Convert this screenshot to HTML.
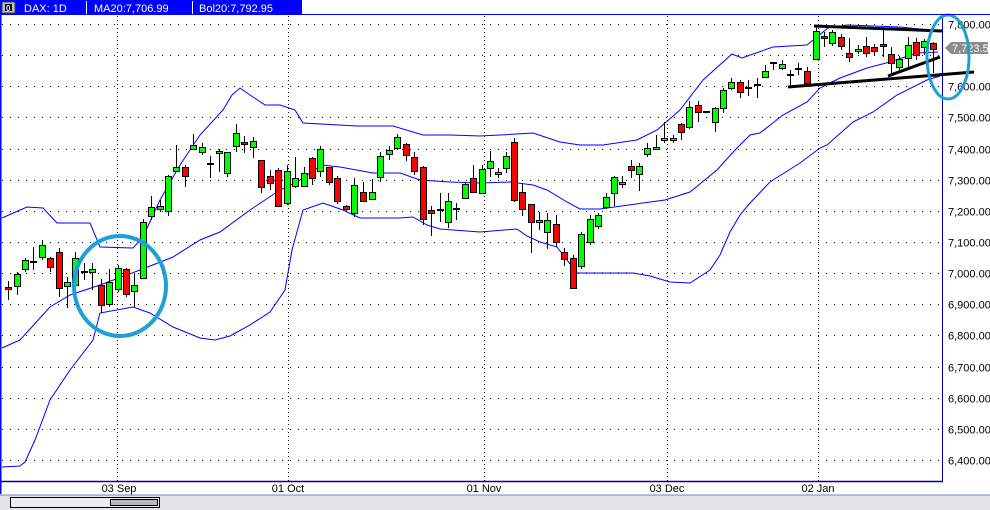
<!DOCTYPE html>
<html><head><meta charset="utf-8"><style>
html,body{margin:0;padding:0;background:#fff;width:990px;height:510px;overflow:hidden}
svg{display:block}
text{font-family:"Liberation Sans",sans-serif}
</style></head><body>
<svg id="s" width="990" height="510" xmlns="http://www.w3.org/2000/svg">
<rect x="0" y="0" width="990" height="510" fill="#fff"/>
<g id="grid"></g>
<g id="bands" fill="none" stroke="#0000ff" stroke-width="1"></g>
<g id="candles"></g>
<g stroke="#000" stroke-width="3" fill="none">
<line x1="814" y1="26" x2="942" y2="31"/>
<line x1="788" y1="87" x2="974" y2="72"/>
<line x1="888" y1="76" x2="940" y2="57"/>
</g>
<ellipse cx="120" cy="286" rx="46" ry="50" fill="none" stroke="#1e9fd8" stroke-width="4"/>
<!-- axis -->
<line x1="942.5" y1="15" x2="942.5" y2="482" stroke="#0000a0" stroke-width="1"/>
<line x1="0" y1="481.5" x2="943" y2="481.5" stroke="#0000a0" stroke-width="1.5"/>
<line x1="0.5" y1="15" x2="0.5" y2="494" stroke="#0000ff" stroke-width="2"/>
<g id="labels" font-size="11" fill="#000"></g>
<g>
<polygon points="945,48 951,42 988,42 988,54 951,54" fill="#8c8c8c"/>
<text x="952" y="52" font-size="11" fill="#fff">7,723.52</text>
</g>
<ellipse cx="948" cy="57" rx="21" ry="42" fill="none" stroke="#1e9fd8" stroke-width="3"/>
<g font-size="11" fill="#000" text-anchor="middle">
<text x="119" y="492">03 Sep</text>
<text x="288" y="492">01 Oct</text>
<text x="484" y="492">01 Nov</text>
<text x="667" y="492">03 Dec</text>
<text x="818" y="492">02 Jan</text>
</g>
<rect x="0" y="495" width="990" height="15" fill="#e3e3e8"/>
<line x1="0" y1="495" x2="990" y2="495" stroke="#6a8ad8" stroke-width="1"/>
<rect x="10.5" y="497.5" width="149" height="10" fill="#ececec" stroke="#000"/>
<rect x="110.5" y="499.5" width="47" height="6" fill="#b8b8b8" stroke="#000"/>
<!-- top bar -->
<rect x="0" y="0" width="302" height="15" fill="#0000ff"/>
<line x1="0" y1="14.5" x2="990" y2="14.5" stroke="#0000ff" stroke-width="1"/>
<rect x="2" y="2" width="13" height="11" fill="#c0c0c0" stroke="#404040" stroke-width="1"/>
<rect x="5" y="4" width="7" height="7" fill="#000"/>
<text x="6" y="11" font-size="8" fill="#fff" font-weight="bold">0</text>
<line x1="86.5" y1="1" x2="86.5" y2="14" stroke="#fff"/>
<line x1="192.5" y1="1" x2="192.5" y2="14" stroke="#fff"/>
<g font-size="11" fill="#fff">
<text x="24" y="12">DAX: 1D</text>
<text x="94" y="12">MA20:7,706.99</text>
<text x="199" y="12">Bol20:7,792.95</text>
</g>
</svg>
<script>
var NS="http://www.w3.org/2000/svg";
function el(p,t,a){var e=document.createElementNS(NS,t);for(var k in a)e.setAttribute(k,a[k]);document.getElementById(p).appendChild(e);return e;}
// grid
for(var i=0;i<=14;i++){var y=Math.round(24+i*31.14)+0.5;
 el("grid","line",{x1:2,y1:y,x2:942,y2:y,stroke:"#000","stroke-dasharray":"1 7","stroke-width":1});
 var v=7800-i*100;var s=(v+"").replace(/^(\d)(\d{3})$/,"$1,$2")+".00";
 if(i!=1){var t=el("labels","text",{x:948,y:y+4});t.textContent=s;}
}
[117,288,484,667,818].forEach(function(x){el("grid","line",{x1:x+0.5,y1:16,x2:x+0.5,y2:481,stroke:"#000","stroke-dasharray":"1 3"});});
// bands
var up=[[2,218],[27,207],[43,208],[57,223],[90,223],[100,247],[133,248],[143,237],[160,200],[180,165],[200,135],[223,110],[232,95],[240,88],[250,95],[265,105],[280,105],[295,110],[303,123],[357,126],[393,126],[423,135],[450,135],[480,136],[500,135],[533,133],[560,142],[580,145],[603,145],[637,140],[657,130],[680,110],[703,80],[732,54],[742,58],[773,47],[807,45],[828,28],[847,25],[900,27],[930,30],[940,31]];
var mid=[[2,348],[20,340],[50,307],[70,295],[100,285],[140,270],[173,257],[200,240],[220,232],[250,210],[280,190],[297,182],[322,165],[340,167],[373,173],[400,173],[420,180],[450,182],[480,183],[510,182],[533,185],[547,190],[567,202],[580,209],[600,209],[650,202],[665,200],[690,192],[717,170],[735,150],[750,135],[760,133],[783,115],[807,102],[820,88],[840,78],[867,68],[890,62],[917,53],[938,52]];
var lo=[[2,467],[20,466],[25,462],[35,440],[50,400],[70,370],[93,340],[100,313],[133,307],[150,313],[173,327],[200,338],[215,340],[230,336],[250,325],[270,312],[285,290],[292,250],[303,210],[323,203],[343,210],[360,218],[400,218],[413,217],[427,225],[440,229],[480,232],[517,229],[527,236],[540,242],[557,247],[577,273],[633,273],[650,276],[670,282],[690,283],[710,270],[720,255],[730,232],[740,215],[750,203],[770,182],[800,163],[820,148],[827,145],[853,122],[873,112],[897,95],[927,80],[940,76]];
[up,mid,lo].forEach(function(a){el("bands","polyline",{points:a.map(function(p){return p.join(",")}).join(" ")});});
// candles: x, wickTop, wickBot, bodyTop, bodyBot, c
var C=[[8,281,300,287,289,"r"],[17,272,295,274,286,"g"],[25,258,272,260,269,"g"],[33,247,270,262,262,"d"],[42,240,260,245,257,"g"],[50,257,272,258,267,"r"],[59,248,297,252,288,"r"],[67,277,308,282,286,"g"],[75,252,290,258,285,"g"],[84,263,280,272,272,"d"],[92,263,290,269,272,"g"],[101,279,313,285,305,"r"],[109,269,307,282,304,"g"],[118,265,292,268,289,"g"],[126,268,297,269,294,"r"],[134,273,307,285,291,"g"],[143,219,279,222,278,"g"],[151,196,220,207,216,"g"],[160,200,212,206,209,"g"],[168,175,216,176,211,"g"],[176,145,172,167,171,"g"],[185,165,187,167,176,"r"],[193,134,150,145,149,"g"],[202,143,155,147,152,"g"],[210,156,178,164,164,"d"],[219,149,172,151,153,"g"],[227,152,177,152,173,"g"],[236,124,152,133,146,"g"],[244,136,153,142,144,"r"],[253,137,158,141,147,"g"],[261,160,193,160,187,"r"],[270,170,190,176,183,"r"],[278,168,207,170,206,"r"],[287,165,205,171,203,"g"],[295,157,188,178,186,"g"],[304,167,187,173,186,"g"],[312,157,185,158,178,"r"],[320,146,177,149,171,"g"],[329,167,185,167,182,"r"],[337,176,204,178,201,"r"],[346,205,212,206,209,"r"],[354,178,217,185,213,"g"],[363,182,202,192,201,"r"],[372,179,200,192,199,"g"],[380,152,182,156,177,"g"],[389,146,160,150,154,"g"],[397,134,150,137,148,"g"],[406,143,161,144,155,"r"],[414,152,175,157,171,"r"],[423,166,225,167,219,"r"],[431,206,236,210,213,"r"],[440,193,222,210,210,"d"],[448,193,228,201,222,"g"],[456,203,220,209,209,"d"],[465,182,198,184,198,"g"],[473,165,192,178,192,"r"],[482,165,193,169,193,"g"],[490,151,177,161,168,"g"],[498,168,178,172,173,"g"],[506,152,173,156,168,"g"],[514,138,202,142,200,"r"],[522,183,216,192,209,"r"],[531,204,253,204,222,"r"],[539,212,230,220,222,"g"],[547,213,249,220,232,"g"],[556,215,247,224,242,"r"],[564,248,266,252,259,"r"],[573,255,288,258,288,"r"],[581,232,269,234,266,"g"],[590,215,245,219,242,"g"],[598,213,229,215,226,"g"],[606,193,209,197,207,"g"],[614,176,206,177,193,"g"],[622,176,188,182,184,"g"],[631,160,178,166,170,"r"],[639,163,191,166,174,"g"],[647,143,157,148,154,"g"],[656,135,150,147,149,"g"],[664,122,143,138,140,"g"],[673,135,143,138,140,"g"],[681,123,140,124,132,"r"],[689,101,129,107,127,"g"],[698,101,122,105,112,"r"],[706,112,112,112,112,"d"],[715,107,132,108,122,"g"],[723,88,113,90,108,"g"],[731,78,90,82,88,"g"],[740,80,98,82,92,"r"],[748,80,96,88,88,"d"],[757,78,98,85,85,"d"],[765,65,78,71,77,"g"],[773,62,70,63,63,"d"],[782,60,70,64,68,"g"],[790,70,87,75,75,"d"],[798,63,75,69,69,"d"],[807,67,85,71,83,"r"],[816,27,60,31,59,"g"],[824,32,47,36,38,"r"],[832,30,46,32,43,"g"],[841,34,50,37,46,"r"],[849,38,62,53,57,"r"],[858,45,54,49,51,"g"],[866,37,57,46,53,"r"],[874,44,56,47,51,"r"],[883,30,57,44,46,"r"],[891,47,75,54,63,"r"],[899,56,72,59,67,"g"],[908,37,68,45,58,"g"],[916,38,60,42,55,"r"],[924,39,55,41,47,"g"],[933,42,73,43,49,"r"]];
C.forEach(function(c){var x=c[0];
 el("candles","line",{x1:x+0.5,y1:c[1],x2:x+0.5,y2:c[2],stroke:"#000","stroke-width":1});
 if(c[5]=="d"){el("candles","rect",{x:x-3,y:c[3]-1,width:7,height:2,fill:"#000"});}
 else{var h=Math.max(c[4]-c[3],2);el("candles","rect",{x:x-2.5,y:c[3]+0.5,width:6,height:h,fill:c[5]=="g"?"#00ff00":"#ff0000",stroke:"#000","stroke-width":1});}
});
</script>
</body></html>
